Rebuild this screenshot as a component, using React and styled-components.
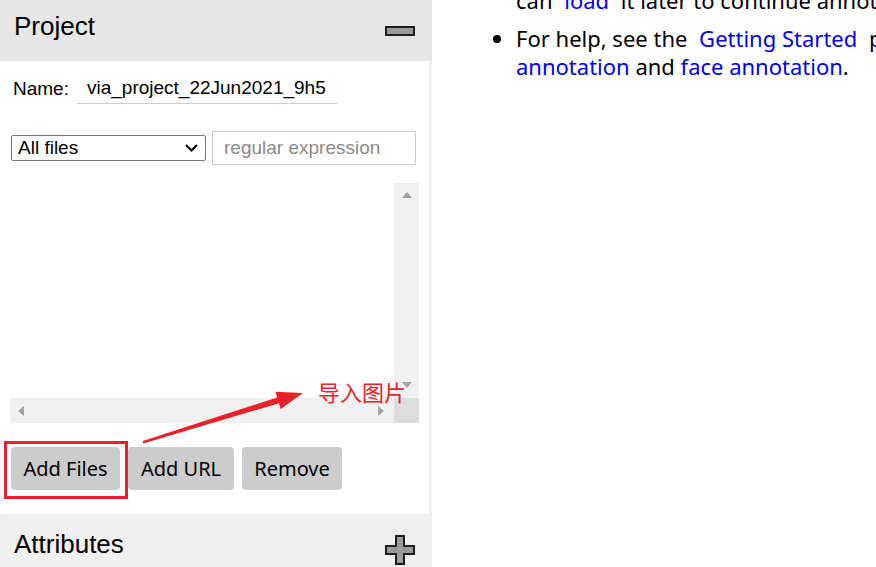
import React from "react";
import styled, { createGlobalStyle } from "styled-components";

const GlobalStyle = createGlobalStyle`
  html, body {
    margin: 0;
    padding: 0;
    background: #fff;
  }
  body {
    font-family: "Liberation Sans", Arial, sans-serif;
    color: #000;
  }
`;

const Page = styled.div`
  position: relative;
  display: flex;
  width: 100vw;
  height: 100vh;
  overflow: hidden;
`;

const LeftPanel = styled.div`
  width: 432px;
  flex-shrink: 0;
  display: flex;
  flex-direction: column;
  background: #f0f0f0;
`;

const SectionHeader = styled.div`
  height: 61px;
  flex-shrink: 0;
  display: flex;
  align-items: center;
  justify-content: space-between;
  padding: 0 17px 0 14px;
  background: ${(p) => (p.active ? "#e6e6e6" : "#f0f0f0")};
  font-size: 26px;
`;

const Title = styled.span`
  margin-bottom: ${(p) => p.lift || 0}px;
`;

const HeaderIcon = styled.span`
  display: flex;
  margin-top: ${(p) => p.drop || 0}px;
`;

const SectionBody = styled.div`
  margin-right: 3px;
  background: #fff;
  padding: 0 10px 24px;
  display: flex;
  flex-direction: column;
`;

const NameRow = styled.div`
  margin-top: 12px;
  height: 31px;
  display: flex;
  align-items: center;
  padding-left: 3px;
  font-size: 19px;
`;

const NameInput = styled.div`
  margin-left: 8px;
  width: 240px;
  height: 30px;
  display: flex;
  align-items: center;
  padding-left: 10px;
  padding-right: 10px;
  overflow: hidden;
  white-space: nowrap;
  border-bottom: 1px solid #cccccc;
  font-size: 19px;
`;

const FilterRow = styled.div`
  margin-top: 27px;
  height: 34px;
  display: flex;
  align-items: center;
  gap: 6px;
  padding-left: 1px;
`;

const SelectBox = styled.div`
  box-sizing: border-box;
  width: 195px;
  height: 26px;
  display: flex;
  align-items: center;
  justify-content: space-between;
  padding: 0 7px 0 6px;
  border: 1px solid #767676;
  border-radius: 2px;
  font-size: 19px;
`;

const RegexInput = styled.div`
  box-sizing: border-box;
  width: 204px;
  height: 34px;
  display: flex;
  align-items: center;
  padding-left: 11px;
  border: 1px solid #cccccc;
  color: #8a8a8a;
  font-size: 19px;
`;

const FileList = styled.div`
  margin-top: 18px;
  width: 409px;
  height: 240px;
  display: grid;
  grid-template-columns: 1fr 25px;
  grid-template-rows: 1fr 25px;
`;

const ListArea = styled.div`
  background: #fff;
`;

const VTrack = styled.div`
  background: #f1f1f1;
  display: flex;
  flex-direction: column;
  align-items: center;
  justify-content: space-between;
  padding: 9px 0 10px;
`;

const HTrack = styled.div`
  background: #f1f1f1;
  display: flex;
  align-items: center;
  justify-content: space-between;
  padding: 0 10px 0 8px;
`;

const Corner = styled.div`
  background: #dcdcdc;
`;

const Arrow = styled.span`
  width: 0;
  height: 0;
  border-style: solid;
  border-color: transparent;
  ${(p) =>
    p.dir === "up"
      ? "border-width: 0 5.5px 6px; border-bottom-color: #a3a3a3;"
      : p.dir === "down"
      ? "border-width: 6px 5.5px 0; border-top-color: #a3a3a3;"
      : p.dir === "left"
      ? "border-width: 5.5px 6px 5.5px 0; border-right-color: #a3a3a3;"
      : "border-width: 5.5px 0 5.5px 6px; border-left-color: #a3a3a3;"}
`;

const ButtonRow = styled.div`
  margin-top: 24px;
  display: flex;
  gap: 8px;
  padding-left: 1px;
`;

const Button = styled.button`
  height: 43px;
  width: ${(p) => p.w}px;
  border: none;
  border-radius: 4px;
  background: #cccccc;
  color: #000;
  font-family: "Noto Sans", "Open Sans", sans-serif;
  font-size: 20px;
  padding: 0;
`;

const RightPane = styled.div`
  flex: 1;
  overflow: hidden;
  font-family: "Noto Sans", "Open Sans", sans-serif;
  font-size: 22px;
  line-height: 28px;
`;

/* list is scrolled: the first item's opening line sits above the window */
const List = styled.ul`
  margin: -42px 0 0;
  padding-left: 84px;
`;

const Item = styled.li`
  white-space: nowrap;
  margin-bottom: 10px;
`;

const Link = styled.a`
  color: #0000ee;
  text-decoration: none;
  padding: ${(p) => (p.spaced ? "0 6px" : "0")};
`;

const Overlay = styled.svg`
  position: absolute;
  left: 0;
  top: 0;
  pointer-events: none;
`;

const HighlightBox = styled.div`
  position: absolute;
  left: 4px;
  top: 441px;
  width: 118px;
  height: 52px;
  border: 3px solid #e8222c;
  pointer-events: none;
`;

const Note = styled.span`
  position: absolute;
  left: 318px;
  top: 377px;
  color: #e8222c;
  font-family: "Noto Sans CJK SC", sans-serif;
  font-size: 22px;
  line-height: 28px;
  pointer-events: none;
`;

const MinusIcon = () => (
  <svg width="30" height="10" viewBox="0 0 30 10">
    <rect x="1" y="1" width="28" height="8" fill="#9a9a9a" stroke="#1e1e1e" strokeWidth="2" />
  </svg>
);

const PlusIcon = () => (
  <svg width="30" height="30" viewBox="0 0 30 30">
    <path
      d="M11 1 H19 V11 H29 V19 H19 V29 H11 V19 H1 V11 H11 Z"
      fill="#9a9a9a"
      stroke="#1e1e1e"
      strokeWidth="2"
    />
  </svg>
);

const Chevron = () => (
  <svg width="13" height="8" viewBox="0 0 13 8">
    <path d="M1 1 L6.5 6.5 L12 1" fill="none" stroke="#000" strokeWidth="2" />
  </svg>
);

export default function App() {
  return (
    <Page>
      <GlobalStyle />
      <LeftPanel>
        <SectionHeader active>
          <Title lift={8}>Project</Title>
          <HeaderIcon>
            <MinusIcon />
          </HeaderIcon>
        </SectionHeader>
        <SectionBody>
          <NameRow>
            <span>Name:</span>
            <NameInput>via_project_22Jun2021_9h5</NameInput>
          </NameRow>
          <FilterRow>
            <SelectBox>
              <span>All files</span>
              <Chevron />
            </SelectBox>
            <RegexInput>regular expression</RegexInput>
          </FilterRow>
          <FileList>
            <ListArea />
            <VTrack>
              <Arrow dir="up" />
              <Arrow dir="down" />
            </VTrack>
            <HTrack>
              <Arrow dir="left" />
              <Arrow dir="right" />
            </HTrack>
            <Corner />
          </FileList>
          <ButtonRow>
            <Button w={109}>Add Files</Button>
            <Button w={106}>Add URL</Button>
            <Button w={100}>Remove</Button>
          </ButtonRow>
        </SectionBody>
        <SectionHeader>
          <Title>Attributes</Title>
          <HeaderIcon drop={10}>
            <PlusIcon />
          </HeaderIcon>
        </SectionHeader>
      </LeftPanel>

      <RightPane>
        <List>
          <Item>
            Remember to save your project before closing this application so that you
            <br />
            can <Link spaced>load</Link> it later to continue annotating.
          </Item>
          <Item>
            For help, see the <Link spaced>Getting Started</Link> page for pointers on image
            <br />
            <Link>annotation</Link> and <Link>face annotation</Link>.
          </Item>
        </List>
      </RightPane>

      <Overlay width="876" height="567" viewBox="0 0 876 567">
        <polygon
          points="142.7,441 277.2,397.5 275.5,391.8 303,393 280.7,409 279,403.3 143.3,443.5"
          fill="#e8222c"
        />
      </Overlay>
      <HighlightBox />
      <Note>导入图片</Note>
    </Page>
  );
}
